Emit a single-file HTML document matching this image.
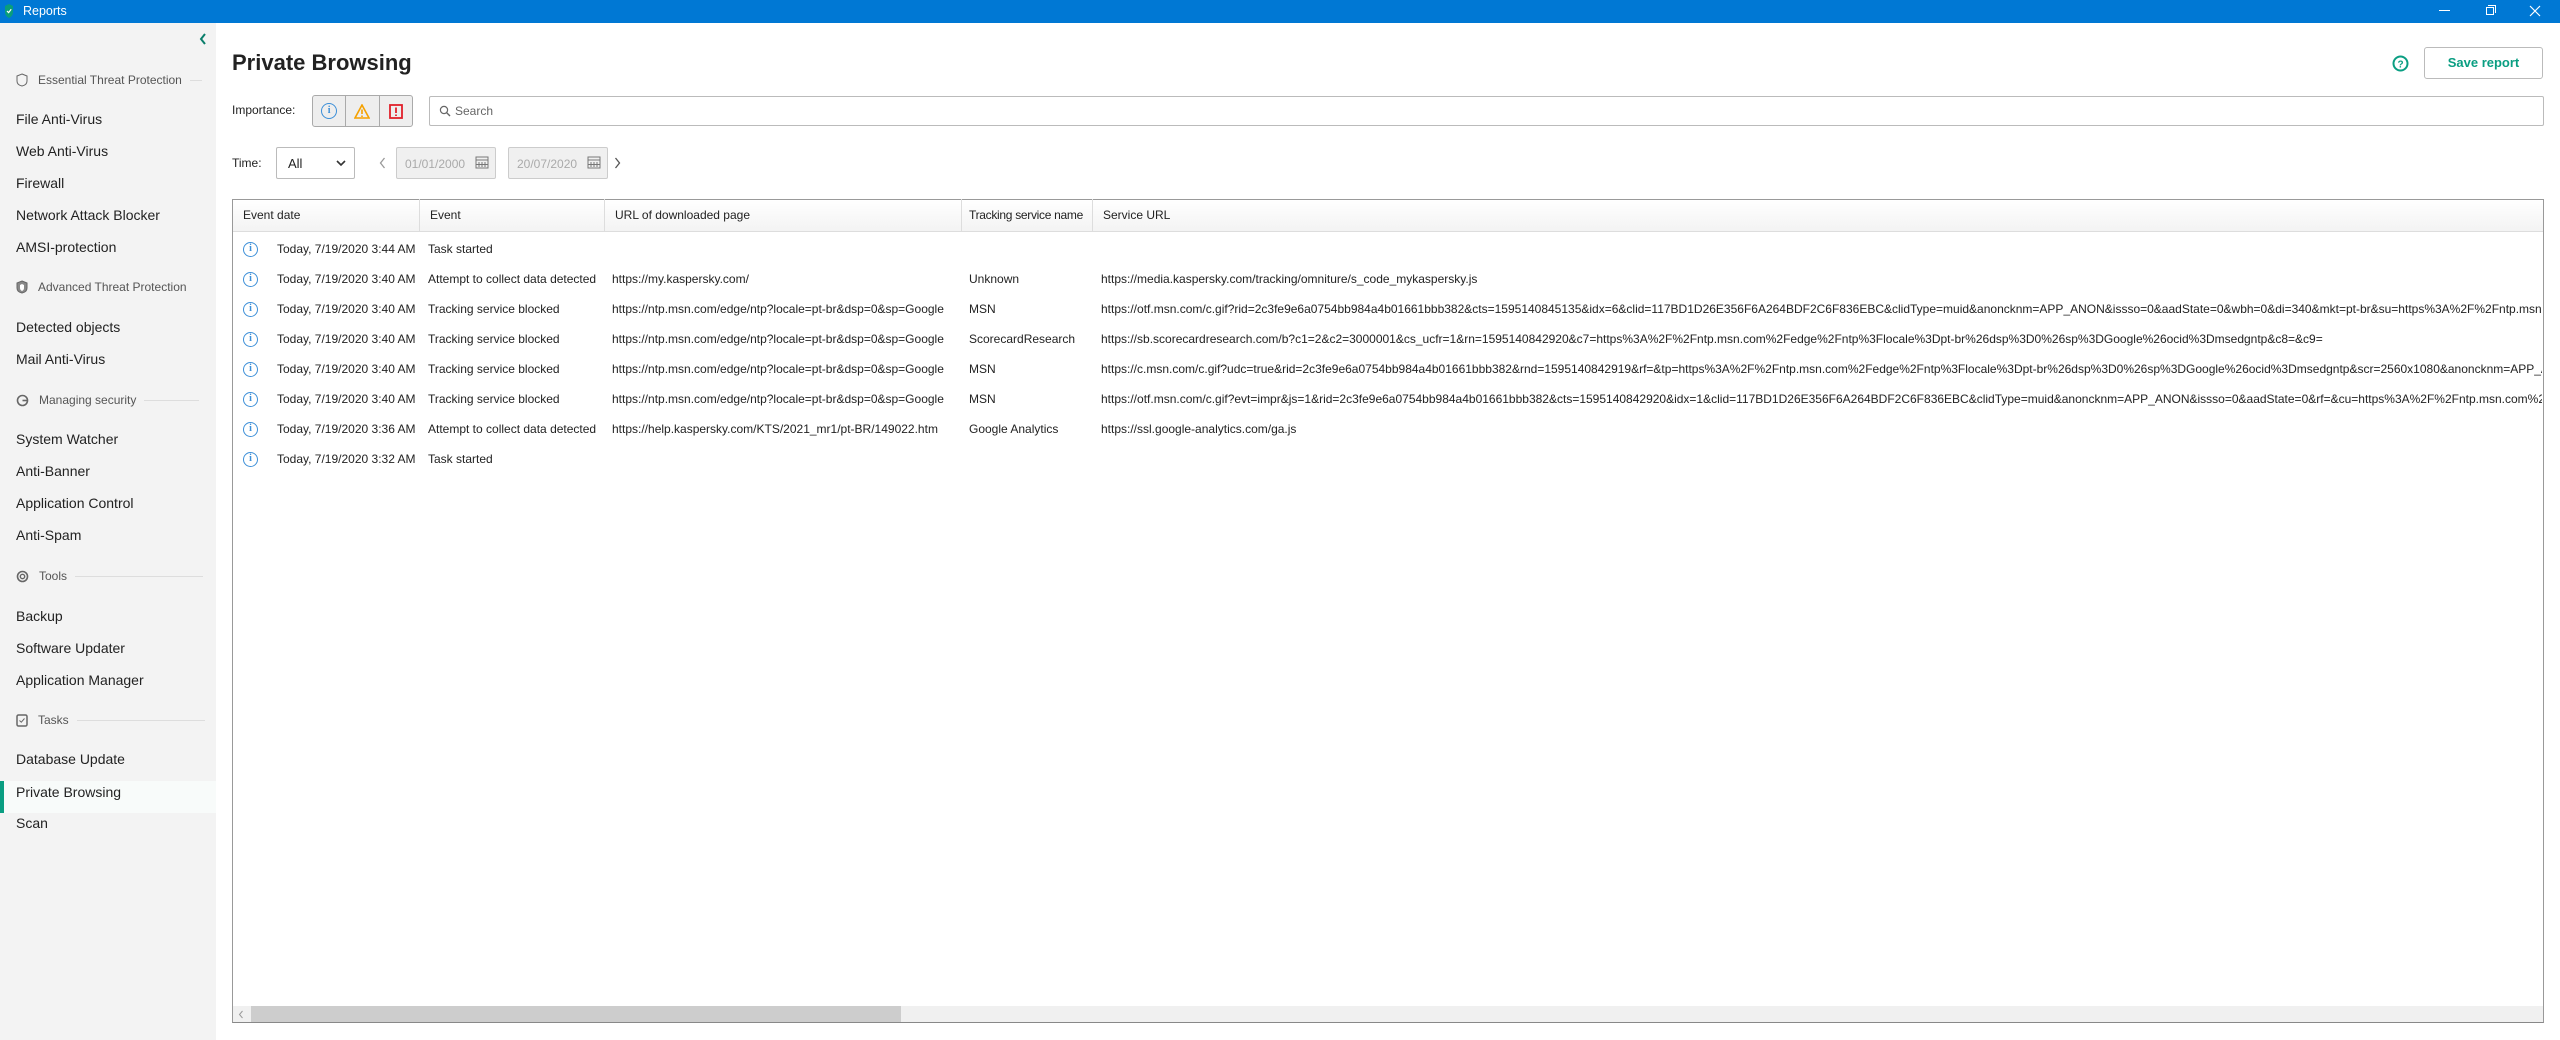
<!DOCTYPE html>
<html><head><meta charset="utf-8"><style>
*{margin:0;padding:0;box-sizing:border-box}
body{width:2560px;height:1040px;overflow:hidden;background:#fff;font-family:"Liberation Sans",sans-serif;color:#222;position:relative}
.abs{position:absolute}
#tb{left:0;top:0;width:2560px;height:23px;background:#0078d4;color:#fff;font-size:13px}
#side{left:0;top:23px;width:216px;height:1017px;background:#f3f3f3}
.it{position:absolute;left:16px;font-size:14px;color:#222;line-height:18px;transform:translateY(-9px)}
.hd{position:absolute;left:16px;font-size:12px;color:#555;display:flex;align-items:center;transform:translateY(-9px);height:18px;white-space:nowrap}
.hd svg{margin-right:10px}
.hd span.l{display:inline-block;width:20px;height:1px;background:#ddd;margin-left:8px}
.t{position:absolute;font-size:12px;white-space:nowrap;line-height:16px;transform:translateY(-8px);overflow:hidden}
.ic{position:absolute;left:243px;width:15px;height:15px;border:1.5px solid #3c8fd8;border-radius:50%;color:#3c8fd8;font-size:10px;font-weight:bold;text-align:center;line-height:12px;transform:translateY(-7px);font-family:"Liberation Serif",serif}
.hc{position:absolute;top:199px;height:33px;border-right:1px solid #ddd;font-size:12px;line-height:33px;padding-left:10px;white-space:nowrap;overflow:hidden}
</style></head><body>
<div id="tb" class="abs">
 <svg class="abs" style="left:4px;top:3px" width="10" height="16" viewBox="0 0 10 16"><path d="M5 1 L9 3 V9 Q9 13 5 15 Q1 13 1 9 V3Z" fill="#0a9e7b"/><path d="M3 8 L4.6 9.6 L7.2 6.2" stroke="#fff" stroke-width="1.2" fill="none"/></svg>
 <div class="abs" style="left:23px;top:4px;font-size:12.5px">Reports</div>
 <div class="abs" style="left:2439px;top:10px;width:11px;height:1px;background:#fff"></div>
 <div class="abs" style="left:2486px;top:7px;width:8px;height:8px;border:1px solid #fff"></div>
 <div class="abs" style="left:2488px;top:5px;width:8px;height:8px;border-top:1px solid #fff;border-right:1px solid #fff"></div>
 <svg class="abs" style="left:2529px;top:5px" width="12" height="12"><path d="M1 1L11 11M11 1L1 11" stroke="#fff" stroke-width="1.2"/></svg>
</div>
<div id="side" class="abs"></div>
<svg class="abs" style="left:199px;top:33px" width="8" height="12"><path d="M6 1L2 6L6 11" stroke="#0a7e6b" stroke-width="2" fill="none"/></svg>
<div class="hd" style="top:80px"><svg width="12" height="14"><path d="M6 1L11 3V8Q11 12 6 13Q1 12 1 8V3Z" stroke="#666" fill="none"/></svg>Essential Threat Protection<span class="l" style="width:12px"></span></div>
<div class="it" style="top:119px">File Anti-Virus</div>
<div class="it" style="top:151px">Web Anti-Virus</div>
<div class="it" style="top:183px">Firewall</div>
<div class="it" style="top:215px">Network Attack Blocker</div>
<div class="it" style="top:247px">AMSI-protection</div>
<div class="hd" style="top:287px"><svg width="12" height="14"><path d="M6 1L11 3V8Q11 12 6 13Q1 12 1 8V3Z" stroke="#666" fill="#888"/><path d="M6 4L8 5V8Q8 10 6 11Q4 10 4 8V5Z" fill="#fff"/></svg>Advanced Threat Protection</div>
<div class="it" style="top:327px">Detected objects</div>
<div class="it" style="top:359px">Mail Anti-Virus</div>
<div class="hd" style="top:400px"><svg width="13" height="13"><circle cx="6.5" cy="6.5" r="5" stroke="#666" stroke-width="1.6" fill="none"/><path d="M6.5 6.5H12" stroke="#666" stroke-width="1.6"/></svg>Managing security<span class="l" style="width:55px"></span></div>
<div class="it" style="top:439px">System Watcher</div>
<div class="it" style="top:471px">Anti-Banner</div>
<div class="it" style="top:503px">Application Control</div>
<div class="it" style="top:535px">Anti-Spam</div>
<div class="hd" style="top:576px"><svg width="13" height="13"><circle cx="6.5" cy="6.5" r="5" stroke="#666" stroke-width="1.6" fill="none"/><circle cx="6.5" cy="6.5" r="2.2" stroke="#666" stroke-width="1.4" fill="none"/></svg>Tools<span class="l" style="width:128px"></span></div>
<div class="it" style="top:616px">Backup</div>
<div class="it" style="top:648px">Software Updater</div>
<div class="it" style="top:680px">Application Manager</div>
<div class="hd" style="top:720px"><svg width="12" height="14"><rect x="1" y="2" width="10" height="11" rx="1.5" stroke="#666" stroke-width="1.5" fill="none"/><path d="M3.5 7.5L5.3 9.2L8.5 5.5" stroke="#666" fill="none"/></svg>Tasks<span class="l" style="width:128px"></span></div>
<div class="it" style="top:759px">Database Update</div>
<div class="abs" style="left:0;top:781px;width:216px;height:32px;background:#f8fbfa"></div>
<div class="abs" style="left:0;top:781px;width:4px;height:32px;background:#0a9e82"></div>
<div class="it" style="top:792px">Private Browsing</div>
<div class="it" style="top:823px">Scan</div>

<div class="abs" style="left:232px;top:50px;font-size:22px;font-weight:bold;color:#222">Private Browsing</div>
<svg class="abs" style="left:2392px;top:55px" width="17" height="17"><circle cx="8.5" cy="8.5" r="7" stroke="#0a9e82" stroke-width="2" fill="none"/><text x="8.5" y="12.5" font-size="10" font-weight="bold" fill="#0a9e82" text-anchor="middle" font-family="Liberation Sans">?</text></svg>
<div class="abs" style="left:2424px;top:47px;width:119px;height:32px;border:1px solid #bbb;border-radius:3px;color:#0a9e82;font-weight:bold;font-size:13px;text-align:center;line-height:30px">Save report</div>

<div class="abs" style="left:232px;top:103px;font-size:12px">Importance:</div>
<div class="abs" style="left:312px;top:95px;width:101px;height:32px;border:1px solid #aaa;border-radius:3px;background:#eee;display:flex">
 <div style="flex:1;border-right:1px solid #aaa;display:flex;align-items:center;justify-content:center"><div style="width:16px;height:16px;border:1.5px solid #3c8fd8;border-radius:50%;color:#3c8fd8;font-size:10px;font-weight:bold;text-align:center;line-height:13px;font-family:'Liberation Serif',serif">i</div></div>
 <div style="flex:1;border-right:1px solid #aaa;display:flex;align-items:center;justify-content:center"><svg width="16" height="15"><path d="M8 1L15 14H1Z" stroke="#f5a100" stroke-width="1.6" fill="none"/><path d="M8 5.5V10M8 11.5V13" stroke="#f5a100" stroke-width="1.6"/></svg></div>
 <div style="flex:1;display:flex;align-items:center;justify-content:center"><svg width="14" height="15"><rect x="1" y="1" width="12" height="13" stroke="#e0202a" stroke-width="1.8" fill="none"/><path d="M7 3.5V9M7 10.5V12" stroke="#e0202a" stroke-width="1.8"/></svg></div>
</div>
<div class="abs" style="left:429px;top:96px;width:2115px;height:30px;border:1px solid #bbb;border-radius:2px"></div>
<svg class="abs" style="left:439px;top:105px" width="12" height="12"><circle cx="5" cy="5" r="3.6" stroke="#666" stroke-width="1.2" fill="none"/><path d="M7.6 7.6L11 11" stroke="#666" stroke-width="1.4"/></svg>
<div class="abs" style="left:455px;top:104px;font-size:12px;color:#666">Search</div>

<div class="abs" style="left:232px;top:156px;font-size:12px">Time:</div>
<div class="abs" style="left:276px;top:147px;width:79px;height:32px;border:1px solid #bbb;border-radius:2px;font-size:13px;padding:8px 0 0 11px">All</div>
<svg class="abs" style="left:336px;top:160px" width="10" height="7"><path d="M1 1L5 5L9 1" stroke="#333" stroke-width="1.6" fill="none"/></svg>
<svg class="abs" style="left:379px;top:157px" width="7" height="12"><path d="M5.5 1L1.5 6L5.5 11" stroke="#999" stroke-width="1.3" fill="none"/></svg>
<div class="abs" style="left:396px;top:147px;width:100px;height:32px;border:1px solid #ccc;border-radius:2px;background:#f0f0f0;font-size:12px;color:#aaa;padding:9px 0 0 8px">01/01/2000</div>
<div class="abs" style="left:508px;top:147px;width:100px;height:32px;border:1px solid #ccc;border-radius:2px;background:#f0f0f0;font-size:12px;color:#aaa;padding:9px 0 0 8px">20/07/2020</div>
<svg class="abs" style="left:475px;top:155px" width="14" height="14"><rect x="1" y="2" width="12" height="11" fill="none" stroke="#777"/><path d="M1 5H13M4 7V12M7 7V12M10 7V12M1 9.5H13" stroke="#777"/></svg>
<svg class="abs" style="left:587px;top:155px" width="14" height="14"><rect x="1" y="2" width="12" height="11" fill="none" stroke="#777"/><path d="M1 5H13M4 7V12M7 7V12M10 7V12M1 9.5H13" stroke="#777"/></svg>
<svg class="abs" style="left:614px;top:157px" width="7" height="12"><path d="M1.5 1L5.5 6L1.5 11" stroke="#555" stroke-width="1.3" fill="none"/></svg>

<div class="abs" style="left:232px;top:199px;width:2312px;height:824px;border:1px solid #999;border-bottom:1px solid #888"></div>
<div class="abs" style="left:233px;top:200px;width:2310px;height:32px;background:linear-gradient(#fff,#f3f3f3);border-bottom:1px solid #ddd"></div>
<div class="hc" style="left:233px;width:187px">Event date</div>
<div class="hc" style="left:420px;width:185px">Event</div>
<div class="hc" style="left:605px;width:357px">URL of downloaded page</div>
<div class="hc" style="left:962px;width:131px;padding-left:7px;letter-spacing:-0.3px">Tracking service name</div>
<div class="hc" style="left:1093px;width:1450px;border-right:none">Service URL</div>

<div class="ic" style="top:249px">i</div><div class="t" style="left:277px;top:249px">Today, 7/19/2020 3:44 AM</div><div class="t" style="left:428px;top:249px">Task started</div>
<div class="ic" style="top:279px">i</div><div class="t" style="left:277px;top:279px">Today, 7/19/2020 3:40 AM</div><div class="t" style="left:428px;top:279px;width:175px">Attempt to collect data detected</div><div class="t" style="left:612px;top:279px">https://my.kaspersky.com/</div><div class="t" style="left:969px;top:279px">Unknown</div><div class="t" style="left:1101px;top:279px">https://media.kaspersky.com/tracking/omniture/s_code_mykaspersky.js</div>
<div class="ic" style="top:309px">i</div><div class="t" style="left:277px;top:309px">Today, 7/19/2020 3:40 AM</div><div class="t" style="left:428px;top:309px">Tracking service blocked</div><div class="t" style="left:612px;top:309px;width:348px">https://ntp.msn.com/edge/ntp?locale=pt-br&amp;dsp=0&amp;sp=Google</div><div class="t" style="left:969px;top:309px">MSN</div><div class="t" style="left:1101px;top:309px;width:1441px">https://otf.msn.com/c.gif?rid=2c3fe9e6a0754bb984a4b01661bbb382&amp;cts=1595140845135&amp;idx=6&amp;clid=117BD1D26E356F6A264BDF2C6F836EBC&amp;clidType=muid&amp;anoncknm=APP_ANON&amp;issso=0&amp;aadState=0&amp;wbh=0&amp;di=340&amp;mkt=pt-br&amp;su=https%3A%2F%2Fntp.msn.com</div>
<div class="ic" style="top:339px">i</div><div class="t" style="left:277px;top:339px">Today, 7/19/2020 3:40 AM</div><div class="t" style="left:428px;top:339px">Tracking service blocked</div><div class="t" style="left:612px;top:339px;width:348px">https://ntp.msn.com/edge/ntp?locale=pt-br&amp;dsp=0&amp;sp=Google</div><div class="t" style="left:969px;top:339px">ScorecardResearch</div><div class="t" style="left:1101px;top:339px;width:1441px">https://sb.scorecardresearch.com/b?c1=2&amp;c2=3000001&amp;cs_ucfr=1&amp;rn=1595140842920&amp;c7=https%3A%2F%2Fntp.msn.com%2Fedge%2Fntp%3Flocale%3Dpt-br%26dsp%3D0%26sp%3DGoogle%26ocid%3Dmsedgntp&amp;c8=&amp;c9=</div>
<div class="ic" style="top:369px">i</div><div class="t" style="left:277px;top:369px">Today, 7/19/2020 3:40 AM</div><div class="t" style="left:428px;top:369px">Tracking service blocked</div><div class="t" style="left:612px;top:369px;width:348px">https://ntp.msn.com/edge/ntp?locale=pt-br&amp;dsp=0&amp;sp=Google</div><div class="t" style="left:969px;top:369px">MSN</div><div class="t" style="left:1101px;top:369px;width:1441px">https://c.msn.com/c.gif?udc=true&amp;rid=2c3fe9e6a0754bb984a4b01661bbb382&amp;rnd=1595140842919&amp;rf=&amp;tp=https%3A%2F%2Fntp.msn.com%2Fedge%2Fntp%3Flocale%3Dpt-br%26dsp%3D0%26sp%3DGoogle%26ocid%3Dmsedgntp&amp;scr=2560x1080&amp;anoncknm=APP_ANON</div>
<div class="ic" style="top:399px">i</div><div class="t" style="left:277px;top:399px">Today, 7/19/2020 3:40 AM</div><div class="t" style="left:428px;top:399px">Tracking service blocked</div><div class="t" style="left:612px;top:399px;width:348px">https://ntp.msn.com/edge/ntp?locale=pt-br&amp;dsp=0&amp;sp=Google</div><div class="t" style="left:969px;top:399px">MSN</div><div class="t" style="left:1101px;top:399px;width:1441px">https://otf.msn.com/c.gif?evt=impr&amp;js=1&amp;rid=2c3fe9e6a0754bb984a4b01661bbb382&amp;cts=1595140842920&amp;idx=1&amp;clid=117BD1D26E356F6A264BDF2C6F836EBC&amp;clidType=muid&amp;anoncknm=APP_ANON&amp;issso=0&amp;aadState=0&amp;rf=&amp;cu=https%3A%2F%2Fntp.msn.com%2F</div>
<div class="ic" style="top:429px">i</div><div class="t" style="left:277px;top:429px">Today, 7/19/2020 3:36 AM</div><div class="t" style="left:428px;top:429px;width:175px">Attempt to collect data detected</div><div class="t" style="left:612px;top:429px;width:348px">https://help.kaspersky.com/KTS/2021_mr1/pt-BR/149022.htm</div><div class="t" style="left:969px;top:429px">Google Analytics</div><div class="t" style="left:1101px;top:429px">https://ssl.google-analytics.com/ga.js</div>
<div class="ic" style="top:459px">i</div><div class="t" style="left:277px;top:459px">Today, 7/19/2020 3:32 AM</div><div class="t" style="left:428px;top:459px">Task started</div>

<div class="abs" style="left:233px;top:1006px;width:2310px;height:16px;background:#f0f0f0"></div>
<div class="abs" style="left:251px;top:1006px;width:650px;height:16px;background:#cdcdcd"></div>
<svg class="abs" style="left:238px;top:1010px" width="6" height="9"><path d="M4.5 1L1.5 4.5L4.5 8" stroke="#999" fill="none"/></svg>
</body></html>
